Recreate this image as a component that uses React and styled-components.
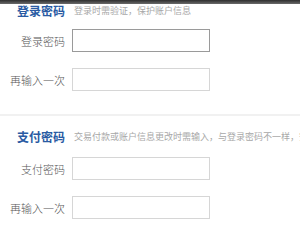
import React from "react";
import styled, { createGlobalStyle } from "styled-components";

const GlobalStyle = createGlobalStyle`
  html, body {
    margin: 0;
    padding: 0;
    background: #ffffff;
    overflow: hidden;
  }
  body {
    font-family: "Noto Sans CJK SC", "Liberation Sans", sans-serif;
  }
`;

const Page = styled.div`
  width: 300px;
  height: 240px;
  overflow: hidden;
  background: #fff;
`;

const TopBar = styled.div`
  height: 4px;
  background: linear-gradient(#2e2e2e, #6a6a6a);
`;

const Section = styled.section`
  padding-top: ${(p) => p.$top}px;
`;

const SectionHeader = styled.div`
  display: flex;
  align-items: center;
  gap: 9px;
  padding-left: 17px;
  height: 14px;
  white-space: nowrap;
`;

const SectionTitle = styled.h2`
  flex: none;
  margin: 0;
  font-family: "Noto Sans CJK SC", serif;
  font-size: 12px;
  font-weight: 700;
  line-height: 14px;
  color: #2a5ba3;
`;

const SectionHint = styled.span`
  min-width: 0;
  font-size: 9px;
  line-height: 14px;
  color: #a8a8a8;
  overflow: hidden;
`;

const Fields = styled.div`
  display: grid;
  grid-template-columns: 65px 138px;
  column-gap: 7px;
  row-gap: 16px;
  margin-top: ${(p) => p.$top}px;
  align-items: center;
`;

const Label = styled.label`
  text-align: right;
  font-size: 11px;
  font-weight: 300;
  color: #555;
`;

const Input = styled.input`
  box-sizing: border-box;
  height: 23px;
  width: 138px;
  margin: 0;
  padding: 0 4px;
  border: 1px solid ${(p) => (p.$active ? "#9a9a9a" : "#d6d6d6")};
  background: #fff;
  outline: none;
`;

const Divider = styled.hr`
  margin: 23px 0 0;
  border: 0;
  height: 2px;
  background: #f1f1f1;
`;

const sections = [
  {
    title: "登录密码",
    hint: "登录时需验证，保护账户信息",
    fields: ["登录密码", "再输入一次"],
  },
  {
    title: "支付密码",
    hint: "交易付款或账户信息更改时需输入，与登录密码不一样，安全级别更高",
    fields: ["支付密码", "再输入一次"],
  },
];

const App = () => (
  <Page>
    <GlobalStyle />
    <TopBar />
    {sections.map((section, i) => (
      <React.Fragment key={section.title}>
        {i > 0 && <Divider />}
        <Section $top={i === 0 ? 0 : 14}>
          <SectionHeader>
            <SectionTitle>{section.title}</SectionTitle>
            <SectionHint>{section.hint}</SectionHint>
          </SectionHeader>
          <Fields $top={i === 0 ? 11 : 13}>
            {section.fields.map((label, j) => (
              <React.Fragment key={label + j}>
                <Label>{label}</Label>
                <Input type="password" $active={i === 0 && j === 0} />
              </React.Fragment>
            ))}
          </Fields>
        </Section>
      </React.Fragment>
    ))}
  </Page>
);

export default App;
